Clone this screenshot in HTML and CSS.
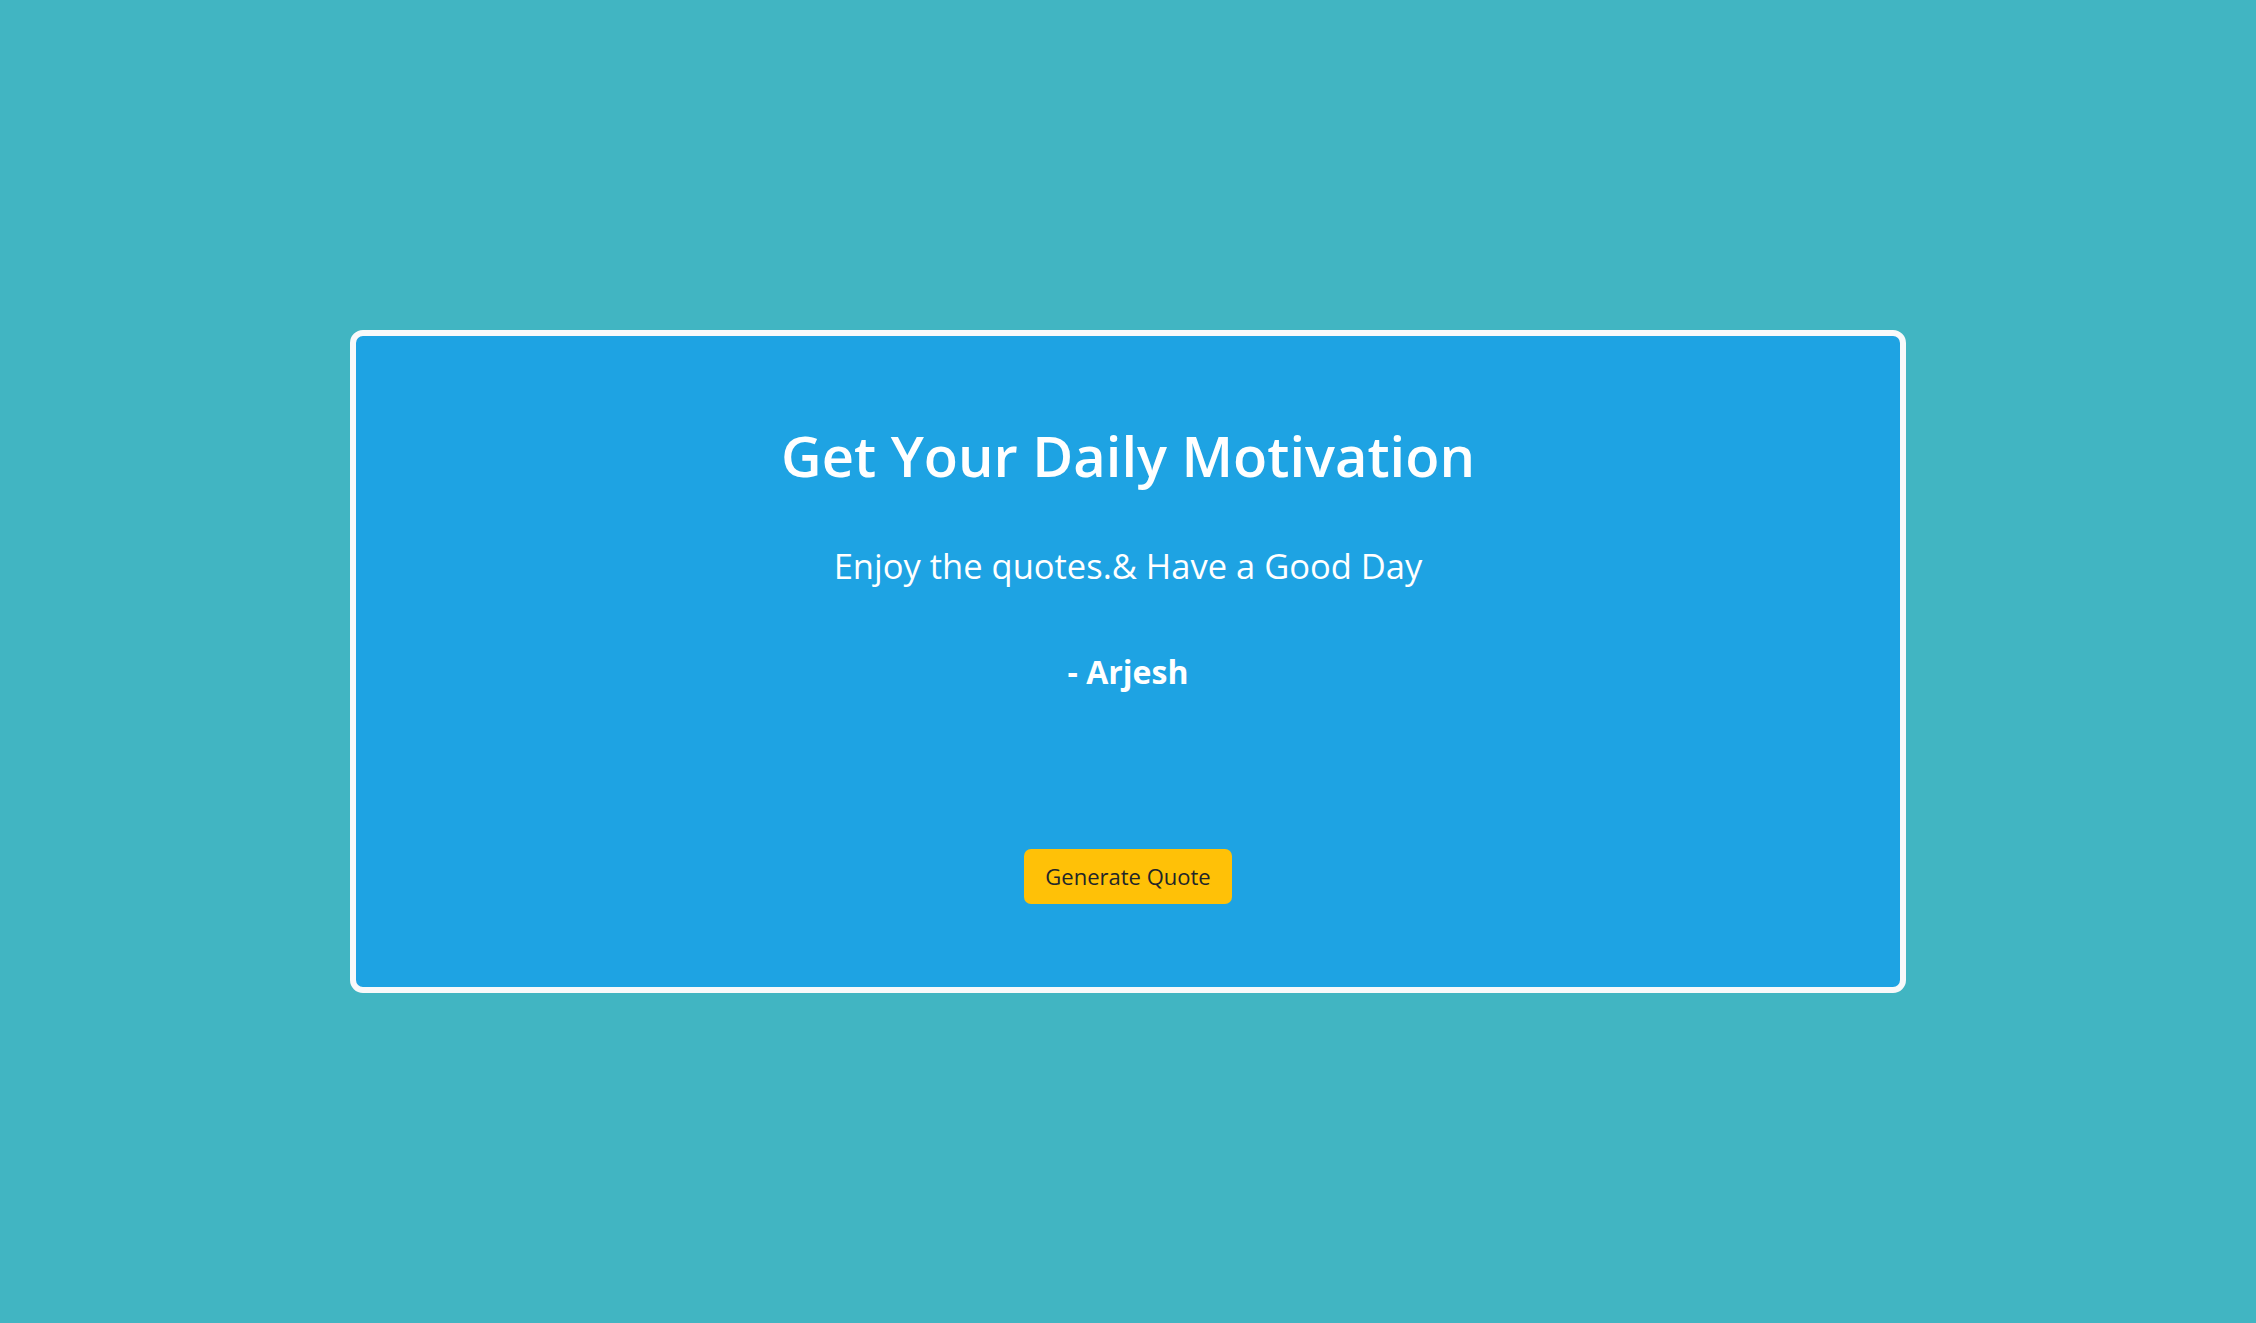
FILE: index.html
```html
<!DOCTYPE html>
<html lang="en">
<head>
<meta charset="utf-8">
<title>Daily Motivation</title>
<link rel="stylesheet" href="styles.css">
</head>
<body>
<main class="page">
  <section class="card">
    <h1 class="title">Get Your Daily Motivation</h1>
    <p class="quote">Enjoy the quotes.&amp; Have a Good Day</p>
    <p class="author">- Arjesh</p>
    <button class="btn" type="button">Generate Quote</button>
  </section>
</main>
</body>
</html>
```

FILE: styles.css
```css
* { box-sizing: border-box; }
html, body { margin: 0; padding: 0; }
body {
  background: #41b5c2;
  font-family: "Open Sans", "Noto Sans", "Liberation Sans", sans-serif;
  color: #fff;
}
.page {
  min-height: 100vh;
  display: flex;
  align-items: center;
  justify-content: center;
}
.card {
  width: 1556px;
  height: 663px;
  background: #1ea3e3;
  border: 6px solid #f8f9fa;
  border-radius: 13px;
  display: flex;
  flex-direction: column;
  align-items: center;
  padding-top: 86px;
}
.title {
  margin: 0;
  font-size: 56px;
  font-weight: 600;
  line-height: 1.2;
}
.quote {
  margin: 56px 0 0;
  font-size: 34.5px;
  font-weight: 400;
  line-height: 1.2;
}
.author {
  margin: 66px 0 0;
  font-size: 32px;
  font-weight: 700;
  line-height: 1.2;
}
.btn {
  margin-top: 158px;
  width: 208px;
  height: 55px;
  background: #ffc107;
  border: none;
  border-radius: 7px;
  color: #212529;
  font-family: "Open Sans", "Noto Sans", sans-serif;
  font-size: 22px;
  padding: 0;
}
```
